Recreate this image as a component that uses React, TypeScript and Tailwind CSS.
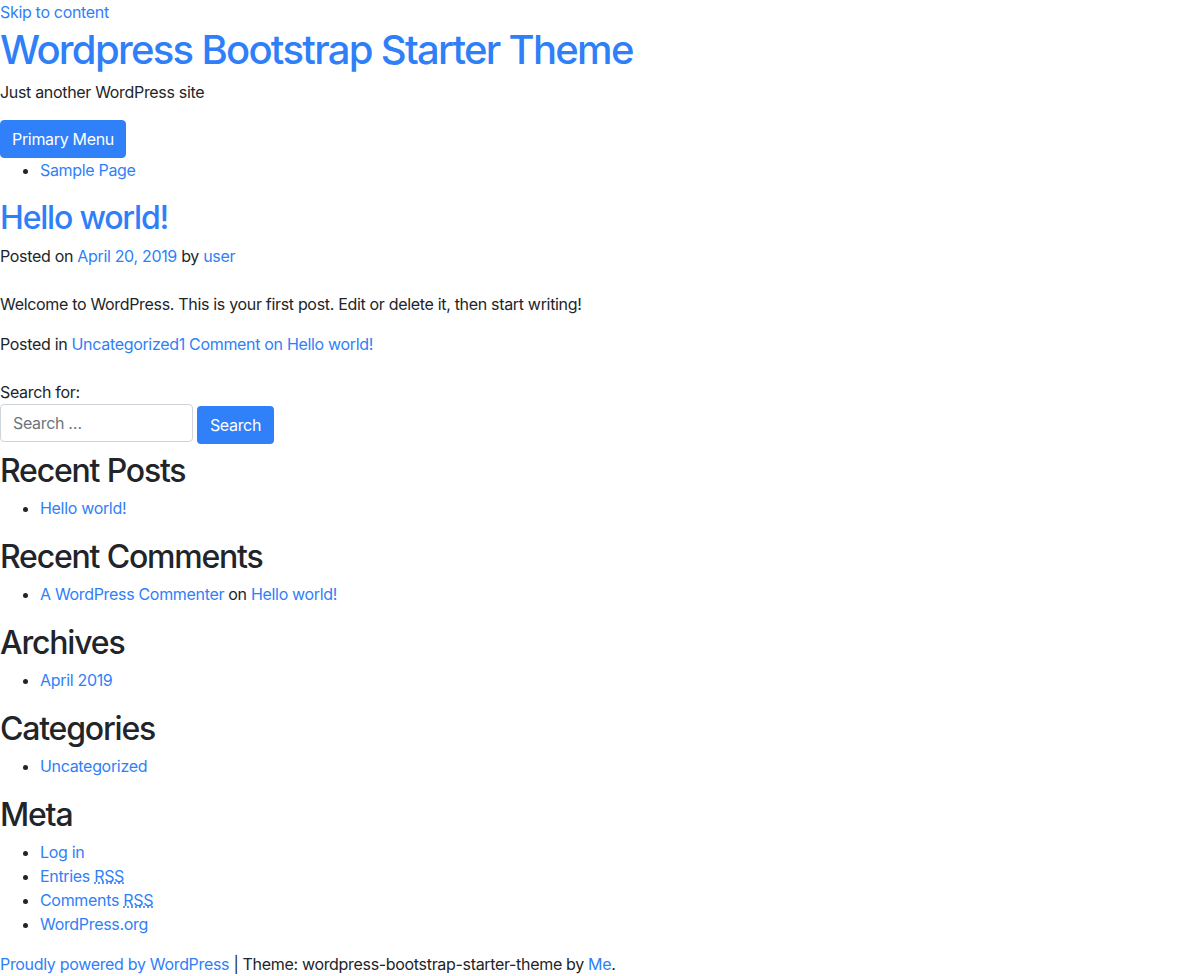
const link = "text-[#2f7ff8] hover:underline";

const WidgetTitle = ({ children }: { children: React.ReactNode }) => (
  <h2 className="text-[32px] leading-[38px] font-medium tracking-[-1.2px] text-[#212529] pt-[2px] mb-[6px]">{children}</h2>
);

const App = () => {
  return (
    <div className="min-h-[976px] bg-white text-base leading-6 tracking-[-0.32px] text-[#212529] font-['Inter','Liberation_Sans',Arial,sans-serif]">
      <a href="#content" className={link}>
        Skip to content
      </a>

      {/* Header */}
      <header>
        <h1 className="text-[40px] leading-[48px] font-medium tracking-[-1.7px] pt-[2px] mb-[6px]">
          <a href="#" className={link}>
            Wordpress Bootstrap Starter Theme
          </a>
        </h1>
        <p className="mb-4">Just another WordPress site</p>
        <nav>
          <button className="bg-[#3080f9] text-white w-[126px] py-1.5 rounded border border-[#3080f9] leading-6">
            Primary Menu
          </button>
          <ul className="list-disc pl-10 mb-4">
            <li>
              <a href="#" className={link}>
                Sample Page
              </a>
            </li>
          </ul>
        </nav>
      </header>

      {/* Post */}
      <article id="content">
        <h2 className="text-[32px] leading-[38px] font-medium tracking-[-1.2px] pt-[1px] mb-[7px]">
          <a href="#" className={link}>
            Hello world!
          </a>
        </h2>
        <div>
          Posted on{" "}
          <a href="#" className={link}>
            April 20, 2019
          </a>{" "}
          by{" "}
          <a href="#" className={link}>
            user
          </a>
        </div>
        <p className="mt-6 mb-4">
          Welcome to WordPress. This is your first post. Edit or delete it, then start writing!
        </p>
        <div>
          Posted in{" "}
          <a href="#" className={link}>
            Uncategorized
          </a>
          <a href="#" className={link}>
            1 Comment on Hello world!
          </a>
        </div>
      </article>

      {/* Sidebar */}
      <aside className="mt-6">
        <form className="h-[70px]">
          <label className="block">Search for:</label>
          <div className="flex items-start gap-1">
            <input
              type="search"
              placeholder="Search …"
              className="w-[193px] h-[38px] px-3 border border-[#ced4da] rounded text-[#495057] placeholder:text-[#6c757d] outline-none"
            />
            <button
              type="button"
              className="mt-[2px] h-[38px] w-[77px] bg-[#3080f9] text-white rounded"
            >
              Search
            </button>
          </div>
        </form>

        <section>
          <WidgetTitle>Recent Posts</WidgetTitle>
          <ul className="list-disc pl-10 mb-4">
            <li>
              <a href="#" className={link}>
                Hello world!
              </a>
            </li>
          </ul>
        </section>

        <section>
          <WidgetTitle>Recent Comments</WidgetTitle>
          <ul className="list-disc pl-10 mb-4">
            <li>
              <a href="#" className={link}>
                A WordPress Commenter
              </a>{" "}
              on{" "}
              <a href="#" className={link}>
                Hello world!
              </a>
            </li>
          </ul>
        </section>

        <section>
          <WidgetTitle>Archives</WidgetTitle>
          <ul className="list-disc pl-10 mb-4">
            <li>
              <a href="#" className={link}>
                April 2019
              </a>
            </li>
          </ul>
        </section>

        <section>
          <WidgetTitle>Categories</WidgetTitle>
          <ul className="list-disc pl-10 mb-4">
            <li>
              <a href="#" className={link}>
                Uncategorized
              </a>
            </li>
          </ul>
        </section>

        <section>
          <WidgetTitle>Meta</WidgetTitle>
          <ul className="list-disc pl-10 mb-4">
            <li>
              <a href="#" className={link}>
                Log in
              </a>
            </li>
            <li>
              <a href="#" className={link}>
                Entries <abbr title="Really Simple Syndication" className="underline decoration-dotted">RSS</abbr>
              </a>
            </li>
            <li>
              <a href="#" className={link}>
                Comments <abbr title="Really Simple Syndication" className="underline decoration-dotted">RSS</abbr>
              </a>
            </li>
            <li>
              <a href="#" className={link}>
                WordPress.org
              </a>
            </li>
          </ul>
        </section>
      </aside>

      {/* Footer */}
      <footer>
        <a href="#" className={link}>
          Proudly powered by WordPress
        </a>{" "}
        | Theme: wordpress-bootstrap-starter-theme by{" "}
        <a href="#" className={link}>
          Me
        </a>
        .
      </footer>
    </div>
  );
};

export default App;
